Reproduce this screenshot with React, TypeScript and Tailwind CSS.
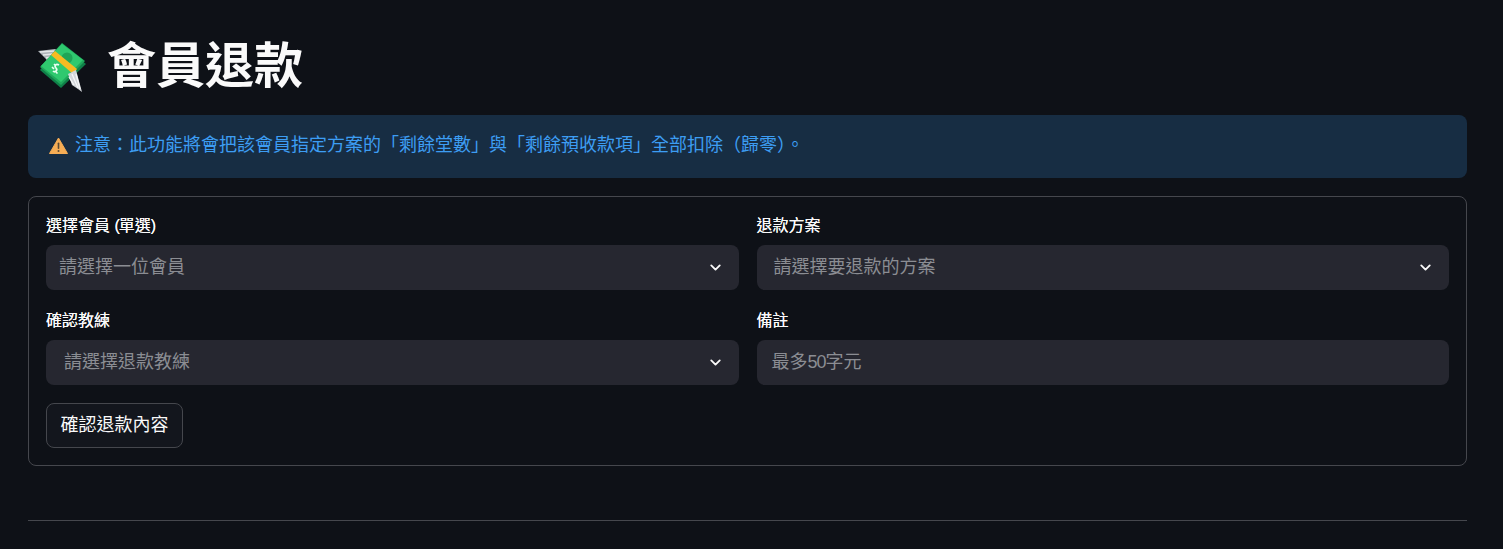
import { ChevronDown } from "lucide-react";

const font = { fontFamily: '"Liberation Sans", "Noto Sans CJK TC", sans-serif' };

function MoneyIcon() {
  return (
    <svg width="64" height="60" viewBox="0 0 64 60" className="shrink-0">
      {/* left wing */}
      <path d="M8 15 L25 13 L30 16 L20 28 L15 22 Z" fill="#aeb4b9" />
      <path d="M10 16 L24 15 M13 19 L23 18 M16 22 L22 21" stroke="#e4e7e9" strokeWidth="1.3" />
      {/* bills */}
      <path d="M10 34 L32 9 L56 28 L31 52 Z" fill="#0f8048" />
      <path d="M10 31 L32 7 L55 25 L31 49 Z" fill="#1ea85b" />
      <path d="M11 30 L32 8 L53 24 L31 46 Z" fill="#2fc96f" />
      <circle cx="37" cy="22" r="5.5" fill="#1fa557" />
      <path d="M27 29 c-3 -2 -5 1 -3 3 c2 2 -1 5 -3 3 M22 28 l1.5 1.5 M24 36 l1.5 1.5 M20 31 l2 2" stroke="#eafff2" strokeWidth="1.7" fill="none" transform="translate(2 0)" />
      {/* band */}
      <path d="M21 19 L25 15 L47 33 L43 38 Z" fill="#f7bb22" />
      {/* right wing */}
      <path d="M38 38 L46 34 L52 56 L48 53 L42 49 Z" fill="#d3d7da" />
      <path d="M42 38 L48 52 M39 41 L44 49 M46 38 L50 53" stroke="#f6f7f8" strokeWidth="1.3" />
    </svg>
  );
}

function WarningIcon() {
  return (
    <svg width="19" height="17" viewBox="0 0 19 17" className="shrink-0">
      <path d="M9.5 1 L18.5 16.5 H0.5 Z" fill="#f6ad55" stroke="#f6ad55" strokeLinejoin="round" />
      <rect x="8.7" y="5.5" width="1.6" height="6.5" rx=".8" fill="#5d4a33" />
      <circle cx="9.5" cy="14" r="1" fill="#5d4a33" />
    </svg>
  );
}

function Field({ label, placeholder, pad, select = true }: { label: React.ReactNode; placeholder: React.ReactNode; pad: string; select?: boolean }) {
  return (
    <div className="flex flex-col">
      <label className="h-[24px] text-[16px] leading-[20px] text-[#fafafa] [text-shadow:0_0_.4px_#fafafa]">{label}</label>
      <div className="mt-[5px] h-[45px] rounded-lg bg-[#262730] flex items-center justify-between pr-[15px]">
        <span className={`${pad} text-[18px] text-[#8b8d93]`}>{placeholder}</span>
        {select && <ChevronDown size={17} strokeWidth={2.6} className="text-[#fafafa]" />}
      </div>
    </div>
  );
}

export default function App() {
  return (
    <div className="h-[549px] overflow-hidden bg-[#0e1117] pl-[28px] pr-[36px] pt-[34px]" style={font}>
      <div className="flex items-center h-[64px] pl-[2px] gap-[13px]">
        <MoneyIcon />
        <h1 className="text-[49px] leading-[64px] font-bold text-[#fafafa]">會員退款</h1>
      </div>
      <div className="mt-[17px] h-[63px] pb-[2px] rounded-lg bg-[#172d43] flex items-center pl-[21px] gap-[7px] text-[18px] text-[#3d9df3]">
        <WarningIcon />
        <span>注意：此功能將會把該會員指定方案的「剩餘堂數」與「剩餘預收款項」全部扣除（歸零）。</span>
      </div>
      <div className="mt-[18px] h-[270px] rounded-lg border border-[#45474d] px-[17px] pt-[19px]">
        <div className="grid grid-cols-2 gap-x-[18px] gap-y-[21px]">
          <Field label={<>選擇會員 <span className="tracking-[-1px]">(</span>單選<span>)</span></>} placeholder="請選擇一位會員" pad="pl-[13px]" />
          <Field label="退款方案" placeholder="請選擇要退款的方案" pad="pl-[17px]" />
          <Field label="確認教練" placeholder="請選擇退款教練" pad="pl-[18px]" />
          <Field label="備註" placeholder={<>最多<span className="tracking-[-1px]">50</span>字元</>} pad="pl-[15px]" select={false} />
        </div>
        <button className="mt-[18px] h-[45px] w-[137px] rounded-lg border border-[#45474d] bg-[#13161d] text-[18px] text-[#fafafa]">確認退款內容</button>
      </div>
      <div className="mt-[54px] h-px bg-[#45474d]" />
    </div>
  );
}
